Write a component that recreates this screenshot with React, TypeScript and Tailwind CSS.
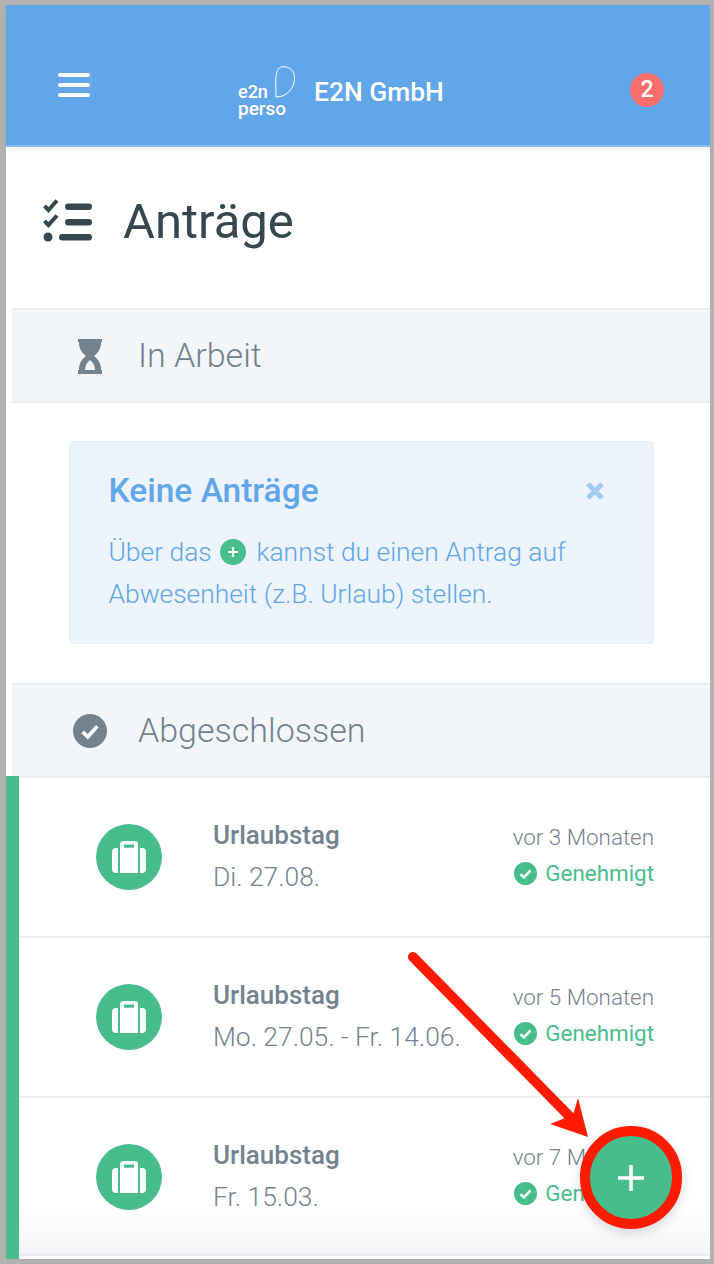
import React from "react";

const Check = ({ className }: { className: string }) => (
  <svg viewBox="0 0 24 24" className={className}>
    <circle cx="12" cy="12" r="12" fill="currentColor" />
    <path d="M6.8 12.6l3.6 3.5 6.8-7.4" fill="none" stroke="#fff" strokeWidth="2.6" />
  </svg>
);

const Case = () => (
  <svg viewBox="0 0 34 32" className="h-[32px] w-[34px]" fill="#fff">
    <path d="M8 3.5A3.5 3.5 0 0 1 11.5 0h11A3.5 3.5 0 0 1 26 3.5V32H8V3.5zM12 3.5v3.2h10V3.5H12z" fillRule="evenodd" />
    <path d="M6 7v25H4A4 4 0 0 1 0 28V11a4 4 0 0 1 4-4h2zM28 7h2a4 4 0 0 1 4 4v17a4 4 0 0 1-4 4h-2V7z" />
  </svg>
);

const rows = [
  { date: "Di. 27.08.", ago: "vor 3 Monaten", h: "h-[162px] -mt-[2px] pt-[2px]", inner: "" },
  { date: "Mo. 27.05. - Fr. 14.06.", ago: "vor 5 Monaten", h: "h-[160px]", inner: "" },
  { date: "Fr. 15.03.", ago: "vor 7 Monaten", h: "h-[158px] bg-gradient-to-b from-white from-70% to-[#f3f4f7]", inner: "pt-[2px]" },
];

const SectionBar = ({ icon, label }: { icon: React.ReactNode; label: string }) => (
  <div className="ml-[6px] flex h-[95px] shrink-0 items-center border-y-2 border-[#e9edf0] bg-[#f2f6f9]">
    <div className="flex w-[126px] justify-center pl-[30px]">{icon}</div>
    <span className="text-[34px] font-light text-[#73828f]">{label}</span>
  </div>
);

export default function App() {
  return (
    <div className="relative h-[1264px] w-[714px] overflow-hidden bg-[#b3b0b0] pb-[5px] pl-[6px] pr-[4px] pt-[5px] font-['Roboto',sans-serif]">
      <div className="flex h-full flex-col bg-white">
        <header className="flex h-[142px] shrink-0 items-center border-b-2 border-[#8dbcf0] bg-[#62a6ea] pl-[52px] pr-[46px] pt-[30px] shadow-[0_3px_6px_rgba(0,0,0,0.06)]">
          <div className="mb-[10px] flex w-[32px] flex-col gap-[6.5px]">
            <span className="h-[3.5px] rounded-full bg-white" />
            <span className="h-[3.5px] rounded-full bg-white" />
            <span className="h-[3.5px] rounded-full bg-white" />
          </div>
          <div className="relative ml-[148px] mt-[6px] h-[54px] w-[58px] text-white">
            <div className="absolute left-0 top-[18px] text-[18px] font-medium leading-[16px]">e2n</div>
            <div className="absolute left-0 top-[35px] text-[19px] font-medium leading-[16px]">perso</div>
            <svg viewBox="0 0 20 32" className="absolute left-[37px] top-0 h-[32px] w-[20px]" fill="none" stroke="#fff" strokeWidth="1">
              <path d="M1 31C1 22 .5 16 1 11 1.5 4 4 .7 8 .7c6 0 11.500 3.300 11.500 11.300C19.500 22 12 31 1 31z" />
            </svg>
          </div>
          <span className="ml-[18px] mt-[6px] text-[26.400px] font-medium text-white">E2N GmbH</span>
          <span className="ml-auto flex h-[34px] w-[34px] items-center justify-center rounded-full bg-[#f96d6d] text-[23px] font-medium text-white">2</span>
        </header>

        <div className="flex h-[161px] shrink-0 items-center pb-[12px] pl-[37px]">
          <svg viewBox="0 0 50 44" className="-mt-[2px] h-[44px] w-[50px]" fill="#37474f">
            <path d="M1.500 7l4 4 8.500-9.500" fill="none" stroke="#37474f" strokeWidth="4" />
            <path d="M1.500 22l4 4 8.500-9.500" fill="none" stroke="#37474f" strokeWidth="4" />
            <circle cx="5" cy="38" r="4.500" />
            <rect x="22" y="4.500" width="27" height="6.500" rx="3.250" />
            <rect x="22" y="20" width="27" height="6.500" rx="3.250" />
            <rect x="16" y="35" width="33" height="6.500" rx="3.250" />
          </svg>
          <h1 className="ml-[30px] text-[49px] font-normal text-[#37474f]">Anträge</h1>
        </div>

        <SectionBar
          label="In Arbeit"
          icon={
            <svg viewBox="0 0 26 36" className="h-[36px] w-[26px]" fill="#73828f">
              <path d="M1 1h24v3h-1c0 6-2 10-7 14 5 4 7 8 7 14h1v4H1v-4h1c0-6 2-10 7-14C4 14 2 10 2 4H1V1z" />
              <path d="M13 22c-3 2.500-5 5.500-5 10h10c0-4.500-2-7.500-5-10z" fill="#f2f6f9" />
            </svg>
          }
        />

        <div className="pb-[39px] pl-[63px] pr-[56px] pt-[38px]">
          <div className="relative h-[203px] rounded-[4px] border border-[#e4eef8] bg-[#ecf3fa] pl-[38.500px] pt-[27px] text-[#62a6ea]">
            <h2 className="text-[33.500px] font-medium leading-[44px]">Keine Anträge</h2>
            <span className="absolute right-[48px] top-[39px] h-[20px] w-[20px]">
              <svg viewBox="0 0 20 20" className="h-[20px] w-[20px]">
                <path d="M3 3l14 14M17 3L3 17" stroke="#a2cbf3" strokeWidth="5" />
              </svg>
            </span>
            <p className="mt-[18px] text-[26.400px] font-light leading-[42px]">
              Über das{" "}
              <span className="ml-[2px] mr-[4px] inline-flex h-[26px] w-[26px] items-center justify-center rounded-full bg-[#48bd8c] align-[2px]">
                <svg viewBox="0 0 14 14" className="h-[14px] w-[14px]">
                  <path d="M7 2v10M2 7h10" stroke="#fff" strokeWidth="2.200" />
                </svg>
              </span>{" "}
              kannst du einen Antrag auf
              <br />
              Abwesenheit (z.B. Urlaub) stellen.
            </p>
          </div>
        </div>

        <SectionBar
          label="Abgeschlossen"
          icon={<Check className="h-[34px] w-[34px] text-[#73828f]" />}
        />

        {rows.map((r) => (
          <div key={r.date} className={`${r.h} shrink-0 border-l-[13px] border-l-[#48bd8c]`}>
            <div className={`flex h-full items-center border-b-2 border-[#e9edf0] pl-[77px] pr-[56px] ${r.inner}`}>
              <div className="flex h-[66px] w-[66px] shrink-0 items-center justify-center rounded-full bg-[#48bd8c]">
                <Case />
              </div>
              <div className="ml-[51px] pb-[2px]">
                <div className="text-[26px] font-medium leading-[42px] text-[#73828f]">Urlaubstag</div>
                <div className="text-[26.400px] font-light leading-[42px] text-[#73828f]">{r.date}</div>
              </div>
              <div className="ml-auto flex flex-col items-end pb-[4px]">
                <div className="text-[22.400px] font-light leading-[36px] text-[#73828f]">{r.ago}</div>
                <div className="flex items-center gap-[8px] text-[22.400px] font-normal leading-[36px] text-[#48bd8c]">
                  <Check className="h-[23px] w-[23px]" />
                  Genehmigt
                </div>
              </div>
            </div>
          </div>
        ))}
        <div className="min-h-0 flex-1 border-l-[13px] border-l-[#48bd8c] bg-white" />
      </div>

      <svg viewBox="0 0 714 1264" className="pointer-events-none absolute left-0 top-0 h-[1264px] w-[714px]">
        <path d="M413 957L577 1124" stroke="#ff1a00" strokeWidth="10" strokeLinecap="round" fill="none" />
        <path d="M578 1098L588 1137L550 1124L573 1115z" fill="#ff1a00" />
      </svg>

      <div className="absolute left-[580px] top-[1126px] flex h-[103px] w-[102px] items-center justify-center rounded-full border-[10px] border-[#ff1a00] bg-[#48bd8c] shadow-[0_4px_12px_rgba(0,0,0,0.15)]">
        <svg viewBox="0 0 28 28" className="h-[28px] w-[28px]">
          <path d="M14 1v26M1 14h26" stroke="#fff" strokeWidth="3.500" />
        </svg>
      </div>
    </div>
  );
}
